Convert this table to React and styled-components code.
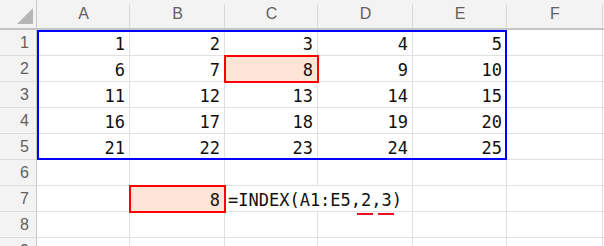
import styled, { createGlobalStyle } from 'styled-components'

const GlobalStyle = createGlobalStyle`
  html, body {
    margin: 0;
    background: #ffffff;
    overflow: hidden;
  }
`;

const COLUMNS = ['A', 'B', 'C', 'D', 'E', 'F', ''];
const ROWS = [1, 2, 3, 4, 5, 6, 7, 8, 9];

// values by "row:column index" (column index 1 = A)
const values = {};
for (let r = 1; r <= 5; r++) {
    for (let c = 1; c <= 5; c++) {
        values[`${r}:${c}`] = (r - 1) * 5 + c;
    }
}
values['7:2'] = 8;

const selected = ['2:3', '7:2'];

export default function App() {
    return (
        <>
            <GlobalStyle />
            <Sheet>
                <Corner>
                    <svg width="16" height="16" viewBox="0 0 16 16">
                        <polygon points="16,0 16,16 0,16" fill="#b5b5b5" />
                    </svg>
                </Corner>
                {COLUMNS.map((col, i) => (
                    <ColHeader key={i} $col={i + 2}>{col}</ColHeader>
                ))}

                {ROWS.map((r) => [
                    <RowHeader key={`h${r}`} $row={r + 1}>{r}</RowHeader>,
                    ...COLUMNS.map((col, i) => {
                        const key = `${r}:${i + 1}`;
                        if (key === '7:3') {
                            return (
                                <FormulaCell key={key} $row={r + 1} $col={i + 2}>
                                    =INDEX(A1:E5,<Flagged>2</Flagged>,<Flagged>3</Flagged>)
                                </FormulaCell>
                            );
                        }
                        return (
                            <Cell key={key} $row={r + 1} $col={i + 2} $selected={selected.includes(key)}>
                                {values[key]}
                            </Cell>
                        );
                    }),
                ])}

                <RangeBox />
            </Sheet>
        </>
    );
}

const Sheet = styled.div`
    display: grid;
    grid-template-columns: 37px 93px 95px 93px 95px 94px 96px 1fr;
    grid-template-rows: 30px repeat(9, 26px);
    width: 604px;
    height: 246px;
    overflow: hidden;
    font-family: "DejaVu Sans Mono", "Liberation Mono", monospace;
`;

const Corner = styled.div`
    grid-row: 1;
    grid-column: 1;
    display: flex;
    justify-content: flex-end;
    align-items: flex-end;
    padding: 0 3px 4px 0;
    background: #f3f3f3;
    border-right: 1px solid #c9c9c9;
    border-bottom: 2px solid #c4c4c4;
`;

const ColHeader = styled.div`
    grid-row: 1;
    grid-column: ${({ $col }) => $col};
    position: relative;
    display: flex;
    align-items: center;
    justify-content: center;
    background: #f3f3f3;
    border-bottom: 2px solid #c4c4c4;
    color: #616161;
    font-family: "Liberation Sans", Arial, sans-serif;
    font-size: 16px;

    /* header separators stop short of the top edge */
    &::after {
        content: '';
        position: absolute;
        top: 4px;
        right: 0;
        bottom: 0;
        width: 1px;
        background: #d9d9d9;
    }
`;

const RowHeader = styled.div`
    grid-row: ${({ $row }) => $row};
    grid-column: 1;
    display: flex;
    align-items: flex-end;
    justify-content: flex-end;
    padding: 0 7px 3px 0;
    background: #f3f3f3;
    border-right: 1px solid #c9c9c9;
    border-bottom: 1px solid #dcdcdc;
    color: #616161;
    font-family: "Liberation Sans", Arial, sans-serif;
    font-size: 16px;
`;

const Cell = styled.div`
    grid-row: ${({ $row }) => $row};
    grid-column: ${({ $col }) => $col};
    position: relative;
    z-index: ${({ $selected }) => ($selected ? 2 : 0)};
    display: flex;
    align-items: flex-end;
    justify-content: flex-end;
    padding: 0 4px 1px 0;
    border-right: 1px solid #e1e1e1;
    border-bottom: 1px solid #e1e1e1;
    background: ${({ $selected }) => ($selected ? '#fce4d6' : 'transparent')};
    outline: ${({ $selected }) => ($selected ? '2px solid #ff0000' : 'none')};
    outline-offset: -1px;
    color: #111111;
    font-size: 17px;
`;

const FormulaCell = styled.div`
    grid-row: ${({ $row }) => $row};
    grid-column: ${({ $col }) => $col};
    position: relative;
    z-index: 1;
    display: flex;
    align-items: flex-end;
    padding: 0 0 1px 3px;
    border-bottom: 1px solid #e1e1e1;
    white-space: nowrap;
    overflow: visible;
    color: #111111;
    font-size: 17px;
`;

const Flagged = styled.span`
    position: relative;

    &::after {
        content: '';
        position: absolute;
        left: -4px;
        right: -2px;
        bottom: -5px;
        height: 2px;
        background: #e81123;
    }
`;

const RangeBox = styled.div`
    grid-row: 2 / 7;
    grid-column: 2 / 7;
    z-index: 3;
    border: 2px solid #0000ff;
    pointer-events: none;
`;
